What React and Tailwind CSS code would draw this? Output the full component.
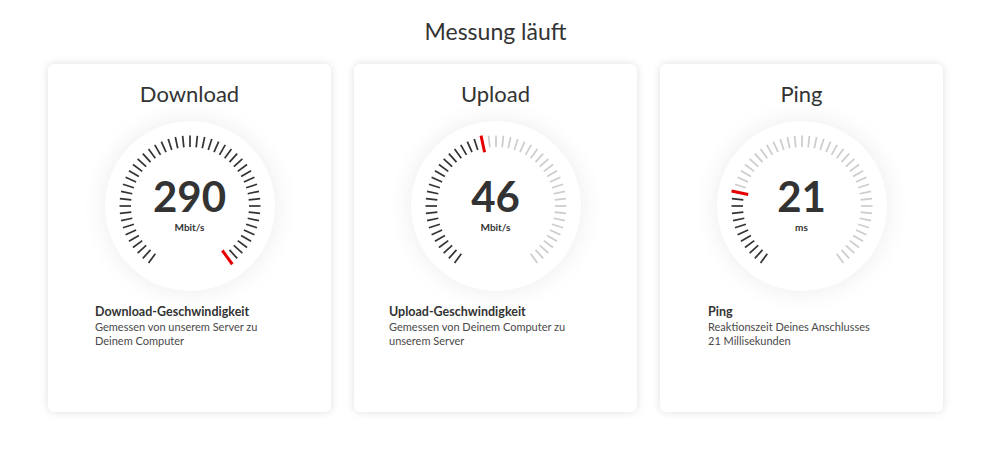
import React from "react";

const N = 49;
const START = -144;
const STEP = 6;

function Gauge({ value, unit, active, fill }) {
  const cx = 85;
  const cy = 85;
  const ticks = [];
  for (let i = 0; i < N; i++) {
    const a = ((START + STEP * i) * Math.PI) / 180;
    const sx = Math.sin(a);
    const sy = -Math.cos(a);
    if (i === active) {
      ticks.push(
        <line
          key={i}
          x1={cx + sx * 55}
          y1={cy + sy * 55}
          x2={cx + sx * 72}
          y2={cy + sy * 72}
          stroke="#e60000"
          strokeWidth="3"
        />
      );
    } else {
      const dark = fill === "all" || i < active;
      ticks.push(
        <line
          key={i}
          x1={cx + sx * 59}
          y1={cy + sy * 59}
          x2={cx + sx * 70.5}
          y2={cy + sy * 70.5}
          stroke={dark ? "#333333" : "#cccccc"}
          strokeWidth="1.7"
        />
      );
    }
  }
  return (
    <div className="relative mt-[11px] flex h-[170px] w-[170px] flex-col items-center justify-center rounded-full bg-white shadow-[0_0_26px_rgba(0,0,0,0.08)]">
      <svg className="absolute inset-0" width="170" height="170" viewBox="0 0 170 170">
        {ticks}
      </svg>
      <div className="relative mt-[-2px] text-[42px] font-bold leading-[36px] text-[#333]">
        {value}
      </div>
      <div className="relative mt-[7px] text-[10px] font-bold leading-[12px] text-[#333]">{unit}</div>
    </div>
  );
}

function Card({ title, value, unit, active, fill, head, lines, pl }) {
  return (
    <div className="flex h-[348px] w-[283px] flex-col items-center rounded-md bg-white pt-[14px] shadow-[0_0_8px_rgba(0,0,0,0.13)]">
      <div className="text-[22px] leading-[32px] text-[#333]">{title}</div>
      <Gauge value={value} unit={unit} active={active} fill={fill} />
      <div className={"mt-[13px] self-stretch " + pl}>
        <div className="text-[12.5px] font-bold leading-[16px] text-[#333]">{head}</div>
        {lines.map((l) => (
          <div key={l} className="text-[11px] leading-[14px] text-[#4a4a4a]">
            {l}
          </div>
        ))}
      </div>
    </div>
  );
}

export default function App() {
  return (
    <div className="min-h-[458px] w-full bg-white font-['Lato','Open_Sans',sans-serif]">
      <div className="pt-[15px] text-center text-[23px] leading-[32px] text-[#333]">
        <span className="ml-[-8px]">Messung läuft</span>
      </div>
      <div className="mt-[17px] flex gap-[23px] pl-[48px]">
        <Card
          title="Download"
          value="290"
          unit="Mbit/s"
          active={48}
          fill="all"
          head="Download-Geschwindigkeit"
          lines={["Gemessen von unserem Server zu", "Deinem Computer"]}
          pl="pl-[47px]"
        />
        <Card
          title="Upload"
          value="46"
          unit="Mbit/s"
          active={22}
          head="Upload-Geschwindigkeit"
          lines={["Gemessen von Deinem Computer zu", "unserem Server"]}
          pl="pl-[35px]"
        />
        <Card
          title="Ping"
          value="21"
          unit="ms"
          active={11}
          head="Ping"
          lines={["Reaktionszeit Deines Anschlusses", "21 Millisekunden"]}
          pl="pl-[48px]"
        />
      </div>
    </div>
  );
}
